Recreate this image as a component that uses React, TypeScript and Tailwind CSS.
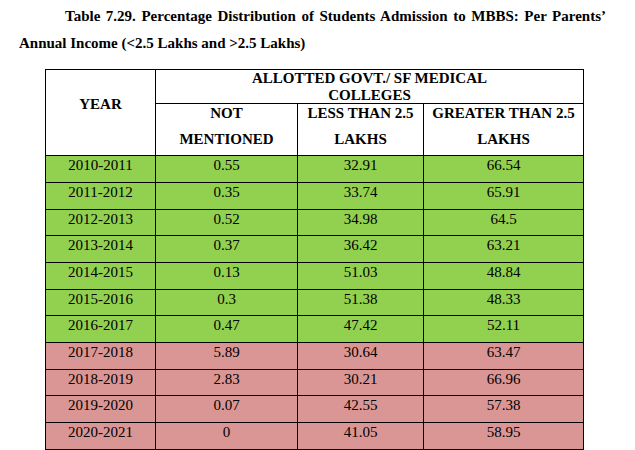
const rows: [string, string, string, string][] = [
  ["2010-2011", "0.55", "32.91", "66.54"],
  ["2011-2012", "0.35", "33.74", "65.91"],
  ["2012-2013", "0.52", "34.98", "64.5"],
  ["2013-2014", "0.37", "36.42", "63.21"],
  ["2014-2015", "0.13", "51.03", "48.84"],
  ["2015-2016", "0.3", "51.38", "48.33"],
  ["2016-2017", "0.47", "47.42", "52.11"],
  ["2017-2018", "5.89", "30.64", "63.47"],
  ["2018-2019", "2.83", "30.21", "66.96"],
  ["2019-2020", "0.07", "42.55", "57.38"],
  ["2020-2021", "0", "41.05", "58.95"],
]

// two-line sub header: second line sits one and a half spaced below the first
function SubHead({ top, bottom }: { top: string; bottom: string }) {
  return (
    <th className="border border-black align-top p-0 font-bold">
      <div className="pt-[0.5px] leading-[17px]">{top}</div>
      <div className="mt-[9.5px] leading-[17px]">{bottom}</div>
    </th>
  )
}

export default function App() {
  return (
    <div className="w-[635px] h-[450px] overflow-hidden bg-white text-black font-[family-name:'Liberation_Serif','Times_New_Roman',serif]">
      <p className="ml-[19px] w-[587px] pt-[3px] text-justify indent-[46px] text-[15px] font-bold leading-[26.6px]">
        Table 7.29. Percentage Distribution of Students Admission to MBBS: Per Parents’ Annual Income (&lt;2.5 Lakhs and &gt;2.5 Lakhs)
      </p>

      <table className="ml-[45px] mt-[12.8px] w-[538px] table-fixed border-collapse text-[15px] text-center">
        <colgroup>
          <col className="w-[110px]" />
          <col className="w-[142px]" />
          <col className="w-[126px]" />
          <col className="w-[160px]" />
        </colgroup>
        <thead>
          <tr className="h-[34.3px]">
            <th rowSpan={2} className="border border-black align-top p-0 pt-[26px] font-bold leading-[17px]">
              YEAR
            </th>
            <th colSpan={3} className="border border-black align-top p-0 font-bold leading-[16.6px]">
              ALLOTTED GOVT./ SF MEDICAL
              <br />
              COLLEGES
            </th>
          </tr>
          <tr className="h-[52px]">
            <SubHead top="NOT" bottom="MENTIONED" />
            <SubHead top="LESS THAN 2.5" bottom="LAKHS" />
            <SubHead top="GREATER THAN 2.5" bottom="LAKHS" />
          </tr>
        </thead>
        <tbody>
          {rows.map((r, i) => (
            <tr key={r[0]} className={`h-[26.67px] ${i < 7 ? "bg-[#92d050]" : "bg-[#da9694]"}`}>
              {r.map((c, j) => (
                <td key={j} className="border border-black align-top p-0 pt-[1px] leading-[17px]">
                  {c}
                </td>
              ))}
            </tr>
          ))}
        </tbody>
      </table>
    </div>
  )
}
